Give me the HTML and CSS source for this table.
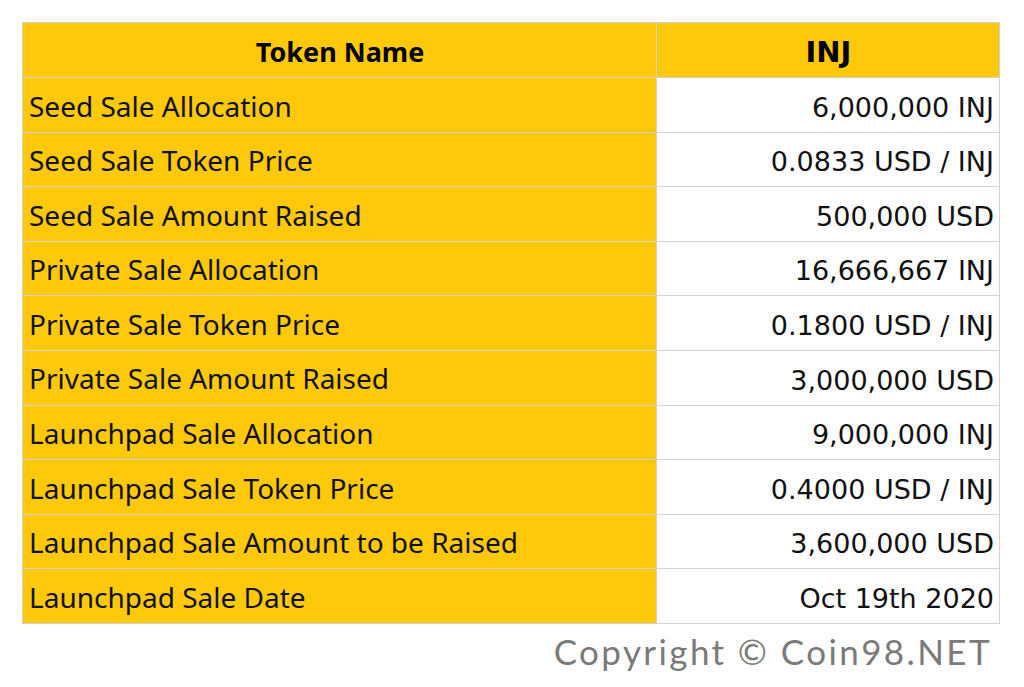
FILE: index.html
```html
<!DOCTYPE html>
<html>
<head>
<meta charset="utf-8">
<link rel="stylesheet" href="styles.css">
</head>
<body>
<div class="wrap">
<table class="tok">
<thead>
<tr><th class="c1">Token Name</th><th class="c2">INJ</th></tr>
</thead>
<tbody>
<tr><td class="lbl">Seed Sale Allocation</td><td class="val">6,000,000 INJ</td></tr>
<tr><td class="lbl">Seed Sale Token Price</td><td class="val">0.0833 USD / INJ</td></tr>
<tr><td class="lbl">Seed Sale Amount Raised</td><td class="val">500,000 USD</td></tr>
<tr><td class="lbl">Private Sale Allocation</td><td class="val">16,666,667 INJ</td></tr>
<tr><td class="lbl">Private Sale Token Price</td><td class="val">0.1800 USD / INJ</td></tr>
<tr><td class="lbl">Private Sale Amount Raised</td><td class="val">3,000,000 USD</td></tr>
<tr><td class="lbl">Launchpad Sale Allocation</td><td class="val">9,000,000 INJ</td></tr>
<tr><td class="lbl">Launchpad Sale Token Price</td><td class="val">0.4000 USD / INJ</td></tr>
<tr><td class="lbl">Launchpad Sale Amount to be Raised</td><td class="val">3,600,000 USD</td></tr>
<tr><td class="lbl">Launchpad Sale Date</td><td class="val">Oct 19th 2020</td></tr>
</tbody>
</table>
<div class="copy">Copyright © Coin98.NET</div>
</div>
</body>
</html>
```
FILE: styles.css
```css
html, body { margin: 0; padding: 0; background: #fff; }
.wrap { padding: 22px 0 0 22px; width: 978px; }
.tok {
  border-collapse: collapse;
  width: 978px;
  table-layout: fixed;
  border: 1px solid #d2d2d2;
}
.tok th, .tok td {
  border: 1px solid #d2d2d2;
  height: 54.6px;
  padding: 3px 5px 0 6px;
  box-sizing: border-box;
  line-height: 1.2;
}
.tok th {
  background: #fec90a;
  color: #000;
  font-family: "Noto Sans", sans-serif;
  font-weight: 700;
  font-size: 27px;
  text-align: center;
  height: 55px;
  padding-top: 4px;
}
.tok th.c1 { width: 634px; }
.tok th.c2 { font-family: "DejaVu Sans", Verdana, sans-serif; font-size: 29px; }
.lbl {
  background: #fec90a;
  font-family: "Noto Sans", sans-serif;
  font-size: 28px;
  color: #111;
  text-align: left;
}
.tok td.val {
  background: #fff;
  font-family: "DejaVu Sans", sans-serif;
  font-size: 27px;
  color: #111;
  text-align: right;
  padding-top: 6px;
}
.copy {
  text-align: right;
  font-family: "Lato", sans-serif;
  font-size: 35px;
  color: #7a7a7a;
  padding: 6px 8px 0 0;
  letter-spacing: 2.4px;
}
```
